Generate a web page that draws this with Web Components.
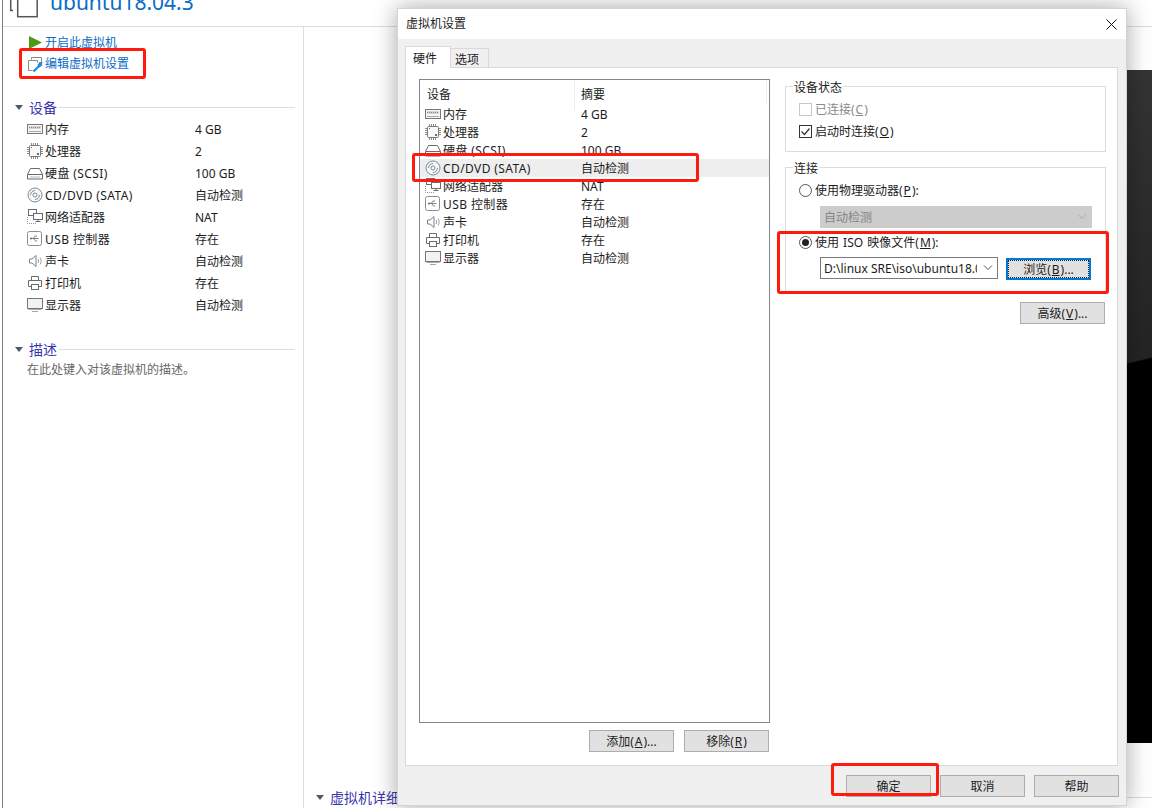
<!DOCTYPE html>
<html lang="zh-CN">
<head>
<meta charset="utf-8">
<title>虚拟机设置</title>
<style>
  html, body { margin: 0; padding: 0; background: #fff; }
  body {
    width: 1152px;
    height: 808px;
    overflow: hidden;
    position: relative;
    font: 12px/16px "Noto Sans", "Noto Sans CJK SC", sans-serif;
    color: #1c1c1c;
  }
  u { margin: 0 1px; text-decoration-thickness: 1px; text-underline-offset: 1px; }
</style>
</head>
<body>

<vm-shell>
  <span slot="title">ubuntu18.04.3</span>
  <vm-sidebar slot="sidebar"></vm-sidebar>
  <section-head slot="details">虚拟机详细信息</section-head>
</vm-shell>

<vm-dialog heading="虚拟机设置">
  <device-list slot="list"></device-list>
  <win-button slot="list-actions"><span>添加(<u>A</u>)...</span></win-button>
  <win-button slot="list-actions"><span>移除(<u>R</u>)</span></win-button>

  <group-box slot="pane" legend="设备状态" style="--box-height: 73px">
    <opt-row type="check" disabled><span>已连接(<u>C</u>)</span></opt-row>
    <opt-row type="check" checked><span>启动时连接(<u>O</u>)</span></opt-row>
  </group-box>
  <group-box slot="pane" legend="连接" style="--box-height: 133px; margin-top: 8px">
    <opt-row type="radio"><span>使用物理驱动器(<u>P</u>):</span></opt-row>
    <div style="margin: 5px 0 3px 21px"><combo-box disabled style="width: 272px">自动检测</combo-box></div>
    <opt-row type="radio" checked><span style="word-spacing: 1px">使用 ISO 映像文件(<u>M</u>):</span></opt-row>
    <div style="display: flex; gap: 8px; margin: 4px 0 0 21px">
      <combo-box style="width: 178px">D:\linux SRE\iso\ubuntu18.04.3</combo-box>
      <win-button focused style="margin-top: 1px"><span>浏览(<u>B</u>)...</span></win-button>
    </div>
  </group-box>
  <div slot="pane" style="display: flex; justify-content: flex-end; margin: 9px 1px 0 0">
    <win-button><span>高级(<u>V</u>)...</span></win-button>
  </div>

  <win-button slot="footer">确定</win-button>
  <win-button slot="footer">取消</win-button>
  <win-button slot="footer">帮助</win-button>
</vm-dialog>

<mark-box style="left: 19px; top: 48px; width: 127px; height: 31px"></mark-box>
<mark-box style="left: 412px; top: 153px; width: 287px; height: 29px"></mark-box>
<mark-box style="left: 777px; top: 231px; width: 332px; height: 63px"></mark-box>
<mark-box style="left: 831px; top: 763px; width: 108px; height: 33px"></mark-box>

<script>
const ICON_PATHS = {
  memory: `
    <rect x="0.5" y="3.5" width="15" height="9" fill="#f6f6f6" stroke="#777"/>
    <rect x="2" y="5" width="12" height="3" fill="#d4d4d4" stroke="none"/>
    <path d="M2 6.500h12" stroke="#888" stroke-dasharray="1 1"/>
    <path d="M2 10.500h12" stroke="#a8a8a8"/>`,
  cpu: `
    <rect x="2.500" y="2.500" width="11" height="11" rx="1" fill="#f8f8f8" stroke="#7a7a7a"/>
    <path d="M4.500 0v2M6.500 0v2M8.500 0v2M10.500 0v2M4.500 14v2M6.500 14v2M8.500 14v2M10.500 14v2M0 4.500h2M0 6.500h2M0 8.500h2M0 10.500h2M14 4.500h2M14 6.500h2M14 8.500h2M14 10.500h2" stroke="#8c8c8c"/>
    <path d="M4 4h1v1H4zM10 10h2v2h-2z" fill="#6b6b6b" stroke="none"/>`,
  disk: `
    <path d="M3.500 3.500h9l3 6v4.500H.5V9.500z" fill="#fff"/>
    <path d="M.5 9.500h15"/>
    <path d="M3 12h10" stroke="#b8b8b8"/>`,
  cd: `
    <circle cx="8" cy="8" r="7" fill="#f7f7f7" stroke="#7d8a94"/>
    <circle cx="8" cy="8" r="2" fill="#fff" stroke="#7d8a94"/>
    <path d="M3.500 8a4.500 4.500 0 0 1 4.500-4.500M12.500 8a4.500 4.500 0 0 1-4.500 4.500" stroke="#6f93ad"/>`,
  network: `
    <rect x="1.500" y="0.500" width="8" height="6" fill="#fff"/>
    <rect x="6.500" y="4.500" width="9" height="6" fill="#fff"/>
    <path d="M11 10.500v2M8.500 12.500h5"/>
    <path d="M.5 8v6.500h9" stroke-dasharray="1 1" stroke="#909090"/>`,
  usb: `
    <rect x="0.500" y="0.500" width="14" height="14" rx="2" fill="#fff" stroke="#8c8c8c"/>
    <path d="M3.500 7.500h8M6 7.500l2-2.500h2M6.500 7.500l2 2.500h1.500" stroke="#808080"/>
    <circle cx="4" cy="7.500" r="1" fill="#6b6b6b" stroke="none"/>`,
  speaker: `
    <path d="M2.500 6v4h2.500l4 3.500v-11L5 6z" fill="#fff" stroke="#808080"/>
    <path d="M11 6c.8 1.200.8 2.800 0 4M13 4.500c1.500 2.200 1.500 4.800 0 7" stroke="#a0a0a0"/>`,
  printer: `
    <path d="M4.500 5V1.500h7V5"/>
    <path d="M4.500 11.500h-3v-6h13v6h-3" fill="#fff"/>
    <rect x="4.500" y="9.500" width="7" height="5" fill="#fff"/>`,
  monitor: `
    <rect x="0.500" y="1.500" width="15" height="10" fill="#f2f2f2" stroke="#777"/>
    <path d="M1.500 12.500h13" stroke="#a8a8a8"/>
    <path d="M5 14.500h6" stroke="#a8a8a8"/>`,
  play: `<path d="M0 0l13 6.500L0 13z" fill="#4f9a12" stroke="none"/>`,
  edit: `
    <path d="M4.500 3.500v-2h10v7" stroke="#8a8a8a"/>
    <path d="M5.500 14.500h-4v-10h9v2" stroke="#8a8a8a"/>
    <path d="M6.500 15.500l6-6" stroke="#1b8ad6" stroke-width="2.200"/>
    <path d="M10.500 9l2-3 3.500 .5-1.500 1.500 1 1-3 2.500z" fill="#1b8ad6" stroke="none"/>`,
  vm: `
    <path d="M.7 0v10.500H3" stroke="#555" stroke-width="1.500"/>
    <rect x="7.700" y="-8" width="19.500" height="24.700" fill="#fff" stroke="#555" stroke-width="1.500"/>`
};

class VmIcon extends HTMLElement {
  constructor() {
    super();
    this.attachShadow({ mode: "open" });
  }

  connectedCallback() {
    const size = this.getAttribute("size") || 16;
    const view = this.getAttribute("view") || "0 0 16 16";
    this.shadowRoot.innerHTML = `
      <style>
        :host { display: block; flex: none; width: ${size}px; height: ${size}px; }
        svg { display: block; overflow: visible; }
      </style>
      <svg width="${size}" height="${size}" viewBox="${view}" fill="none" stroke="#6b6b6b" stroke-width="1">
        ${ICON_PATHS[this.getAttribute("name")] || ""}
      </svg>
    `;
  }
}

class DeviceRow extends HTMLElement {
  constructor() {
    super();
    this.attachShadow({ mode: "open" });
  }

  connectedCallback() {
    this.shadowRoot.innerHTML = `
      <style>
        :host {
          display: grid;
          grid-template-columns: 18px var(--name-col, 150px) 1fr;
          align-items: center;
          height: var(--row-height, 22px);
          padding-left: var(--row-indent, 24px);
          background: var(--row-bg, transparent);
        }
        span { padding-top: 2px; white-space: nowrap; }
        .name { letter-spacing: var(--name-spacing, 0); }
      </style>
      <vm-icon name="${this.getAttribute("icon")}"></vm-icon>
      <span class="name"><slot></slot></span>
      <span>${this.getAttribute("value")}</span>
    `;
  }
}

const DEVICES = [
  ["memory", "内存", "4 GB"],
  ["cpu", "处理器", "2"],
  ["disk", "硬盘 (SCSI)", "100 GB"],
  ["cd", "CD/DVD (SATA)", "自动检测"],
  ["network", "网络适配器", "NAT"],
  ["usb", "USB 控制器", "存在"],
  ["speaker", "声卡", "自动检测"],
  ["printer", "打印机", "存在"],
  ["monitor", "显示器", "自动检测"]
];

function deviceRows(selected) {
  return DEVICES.map(([icon, name, value]) => {
    let style = /[A-Z]/.test(name) ? "--name-spacing: .4px;" : "";
    if (name === selected) style += "--row-bg: #eeeeee;";
    return `<device-row icon="${icon}" value="${value}" style="${style}">${name}</device-row>`;
  }).join("");
}

class SectionHead extends HTMLElement {
  constructor() {
    super();
    this.attachShadow({ mode: "open" });
    this.shadowRoot.innerHTML = `
      <style>
        :host {
          display: flex;
          align-items: center;
          height: 20px;
          font-size: 14px;
          color: #3b35ad;
        }
        .arrow {
          width: 0;
          height: 0;
          margin-right: 6px;
          border-left: 4.5px solid transparent;
          border-right: 4.5px solid transparent;
          border-top: 5px solid #4a5a6a;
        }
        .title { padding-top: 2px; white-space: nowrap; }
        .line { flex: 1; height: 1px; margin-left: 2px; background: #dddddd; }
      </style>
      <span class="arrow"></span>
      <span class="title"><slot></slot></span>
      <span class="line"></span>
    `;
  }
}

class VmSidebar extends HTMLElement {
  constructor() {
    super();
    this.attachShadow({ mode: "open" });
    this.shadowRoot.innerHTML = `
      <style>
        :host { display: block; padding: 5px 8px 0 12px; }
        .links { color: #0a6cc8; }
        .link { display: flex; align-items: center; height: 21px; padding-left: 12px; }
        .link vm-icon { margin-right: 2px; }
        .link span { padding-top: 1px; }
        section-head { margin-top: 23px; }
        .rows { margin: 1px 0 0 -12px; }
        .desc { margin: 1px 0 0 12px; padding-top: 1px; color: #666; line-height: 18px; }
      </style>
      <div class="links">
        <div class="link"><vm-icon name="play" size="13" view="0 0 13 13" style="margin: 0 3px 0 2px"></vm-icon><span>开启此虚拟机</span></div>
        <div class="link"><vm-icon name="edit"></vm-icon><span>编辑虚拟机设置</span></div>
      </div>
      <section-head>设备</section-head>
      <div class="rows">${deviceRows()}</div>
      <section-head>描述</section-head>
      <div class="desc">在此处键入对该虚拟机的描述。</div>
    `;
  }
}

class VmShell extends HTMLElement {
  constructor() {
    super();
    this.attachShadow({ mode: "open" });
    this.shadowRoot.innerHTML = `
      <style>
        :host {
          display: flex;
          flex-direction: column;
          height: 808px;
          margin-left: 2px;
          border-left: 1px solid #808080;
          overflow: hidden;
        }
        header {
          display: flex;
          height: 26px;
          flex: none;
          padding-left: 7px;
          border-bottom: 1px solid #dddddd;
          overflow: hidden;
        }
        .title {
          margin: -11px 0 0 12px;
          font-size: 21px;
          line-height: 26px;
          color: #0a6cc8;
        }
        .body { display: flex; flex: 1; min-height: 0; }
        .side { width: 300px; flex: none; border-right: 1px solid #dddddd; }
        .main { flex: 1; min-width: 0; padding-top: 43px; }
        .preview {
          height: 673px;
          margin-left: 100px;
          background: linear-gradient(166.500deg, #3e3e3e 0, #242424 54.700%, #000 54.900%);
        }
        .details { margin: 44px 0 0 12px; }
      </style>
      <header>
        <vm-icon name="vm" size="28" view="0 0 28 28"></vm-icon>
        <div class="title"><slot name="title"></slot></div>
      </header>
      <div class="body">
        <div class="side"><slot name="sidebar"></slot></div>
        <div class="main">
          <div class="preview"></div>
          <div class="details"><slot name="details"></slot></div>
        </div>
      </div>
    `;
  }
}

class WinButton extends HTMLElement {
  constructor() {
    super();
    this.attachShadow({ mode: "open" });
    this.shadowRoot.innerHTML = `
      <style>
        :host { display: block; flex: none; width: 85px; height: 22px; }
        button {
          display: block;
          box-sizing: border-box;
          width: 100%;
          height: 100%;
          padding: 2px 0 0;
          border: 1px solid #adadad;
          background: #e1e1e1;
          font: inherit;
          color: inherit;
        }
        :host([focused]) button {
          border: 2px solid #0078d7;
          outline: 1px dotted #222;
          outline-offset: -3px;
        }
      </style>
      <button type="button"><slot></slot></button>
    `;
  }
}

class OptRow extends HTMLElement {
  constructor() {
    super();
    this.attachShadow({ mode: "open" });
  }

  connectedCallback() {
    const radio = this.getAttribute("type") === "radio";
    const checked = this.hasAttribute("checked");
    const mark = radio
      ? `<circle cx="6.500" cy="6.500" r="6" fill="#fff" stroke="#555"/>` +
        (checked ? `<circle cx="6.500" cy="6.500" r="3.500" fill="#222"/>` : "")
      : `<rect x="0.500" y="0.500" width="12" height="12" fill="#fff" stroke="${this.hasAttribute("disabled") ? "#c8c8c8" : "#333"}"/>` +
        (checked ? `<path d="M2.500 6.500l3 3 5-6" fill="none" stroke="#333" stroke-width="1.200"/>` : "");
    this.shadowRoot.innerHTML = `
      <style>
        :host {
          display: flex;
          align-items: center;
          gap: 3px;
          height: 22px;
        }
        :host([disabled]) { color: #8a8a8a; }
        svg { display: block; flex: none; }
        .label { padding-top: 2px; }
      </style>
      <svg width="13" height="13" viewBox="0 0 13 13">${mark}</svg>
      <span class="label"><slot></slot></span>
    `;
  }
}

class ComboBox extends HTMLElement {
  constructor() {
    super();
    this.attachShadow({ mode: "open" });
    this.shadowRoot.innerHTML = `
      <style>
        :host {
          display: flex;
          align-items: center;
          box-sizing: border-box;
          flex: none;
          height: 22px;
          padding-left: 3px;
          border: 1px solid #7a7a7a;
          background: #fff;
        }
        :host([disabled]) { border-color: #cccccc; background: #cccccc; color: #858585; }
        .text { flex: 1; min-width: 0; padding-top: 2px; overflow: hidden; white-space: nowrap; }
        svg { display: block; flex: none; margin: 0 4px 0 6px; }
        :host([disabled]) svg { stroke: #a8a8a8; }
      </style>
      <span class="text"><slot></slot></span>
      <svg width="10" height="6" viewBox="0 0 10 6" fill="none" stroke="#555"><path d="M1 .5l4 4 4-4"/></svg>
    `;
  }
}

class GroupBox extends HTMLElement {
  constructor() {
    super();
    this.attachShadow({ mode: "open" });
  }

  connectedCallback() {
    this.shadowRoot.innerHTML = `
      <style>
        :host { display: block; }
        fieldset {
          box-sizing: border-box;
          height: var(--box-height, 70px);
          margin: 0;
          padding: 5px 13px 0;
          border: 1px solid #dcdcdc;
        }
        legend { margin-left: -6px; padding: 0 1px; line-height: 14px; }
        legend span { display: block; transform: translateY(2px); }
      </style>
      <fieldset>
        <legend><span>${this.getAttribute("legend")}</span></legend>
        <slot></slot>
      </fieldset>
    `;
  }
}

class DeviceList extends HTMLElement {
  constructor() {
    super();
    this.attachShadow({ mode: "open" });
    this.shadowRoot.innerHTML = `
      <style>
        :host {
          display: block;
          box-sizing: border-box;
          width: 351px;
          height: 644px;
          border: 1px solid #828790;
          background: #fff;
          --row-height: 18px;
          --row-indent: 5px;
          --name-col: 138px;
        }
        .head {
          display: grid;
          grid-template-columns: 154px 1fr;
          height: 25px;
          line-height: 30px;
          margin-right: 2px;
          border-right: 1px solid #ececec;
        }
        .head span { padding-left: 7px; }
        .head span + span { border-left: 1px solid #ececec; padding-left: 6px; }
      </style>
      <div class="head"><span>设备</span><span>摘要</span></div>
      <div>${deviceRows("CD/DVD (SATA)")}</div>
    `;
  }
}

class VmDialog extends HTMLElement {
  constructor() {
    super();
    this.attachShadow({ mode: "open" });
  }

  connectedCallback() {
    this.shadowRoot.innerHTML = `
      <style>
        :host {
          display: flex;
          flex-direction: column;
          position: absolute;
          left: 397px;
          top: 8px;
          box-sizing: border-box;
          width: 730px;
          height: 798px;
          background: #f0f0f0;
          border: 1px solid #d4d4d4;
          box-shadow: 0 0 22px rgba(0, 0, 0, 0.35);
        }
        .titlebar {
          display: flex;
          align-items: center;
          justify-content: space-between;
          flex: none;
          height: 30px;
          padding: 0 9px 0 8px;
          background: #fff;
        }
        .tabs { display: flex; align-items: flex-end; height: 22px; margin: 7px 0 0 7px; }
        .tab {
          box-sizing: border-box;
          border: 1px solid #d9d9d9;
        }
        .tab.on {
          position: relative;
          z-index: 1;
          width: 46px;
          height: 22px;
          padding-left: 7px;
          line-height: 24px;
          background: #fff;
          border-bottom: 0;
        }
        .tab.off { width: 38px; height: 20px; padding-left: 4px; line-height: 22px; border-left: 0; }
        .panel {
          display: flex;
          gap: 15px;
          box-sizing: border-box;
          height: 699px;
          margin: -1px 8px 0 7px;
          padding: 11px 11px 0 13px;
          background: #fff;
          border: 1px solid #d9d9d9;
        }
        .left { width: 351px; flex: none; }
        .actions { display: flex; justify-content: flex-end; gap: 10px; margin-top: 7px; margin-right: 1px; }
        .right { flex: 1; min-width: 0; }
        .footer { display: flex; justify-content: flex-end; gap: 9px; padding: 9px 7px 0 0; }
        svg { display: block; }
      </style>
      <div class="titlebar">
        <span>${this.getAttribute("heading")}</span>
        <svg width="11" height="11" viewBox="0 0 11 11" stroke="#111" stroke-width="1"><path d="M.5.500l10 10M10.500.500l-10 10"/></svg>
      </div>
      <div class="tabs">
        <div class="tab on">硬件</div>
        <div class="tab off">选项</div>
      </div>
      <div class="panel">
        <div class="left">
          <slot name="list"></slot>
          <div class="actions"><slot name="list-actions"></slot></div>
        </div>
        <div class="right"><slot name="pane"></slot></div>
      </div>
      <div class="footer"><slot name="footer"></slot></div>
    `;
  }
}

// red annotation frames drawn over the screenshot
class MarkBox extends HTMLElement {
  constructor() {
    super();
    this.attachShadow({ mode: "open" });
    this.shadowRoot.innerHTML = `
      <style>
        :host {
          display: block;
          position: absolute;
          box-sizing: border-box;
          border: 3px solid #ff1a0d;
          border-radius: 3px;
          pointer-events: none;
        }
      </style>
    `;
  }
}

customElements.define("vm-icon", VmIcon);
customElements.define("device-row", DeviceRow);
customElements.define("section-head", SectionHead);
customElements.define("vm-sidebar", VmSidebar);
customElements.define("vm-shell", VmShell);
customElements.define("win-button", WinButton);
customElements.define("opt-row", OptRow);
customElements.define("combo-box", ComboBox);
customElements.define("group-box", GroupBox);
customElements.define("device-list", DeviceList);
customElements.define("vm-dialog", VmDialog);
customElements.define("mark-box", MarkBox);
</script>
</body>
</html>
